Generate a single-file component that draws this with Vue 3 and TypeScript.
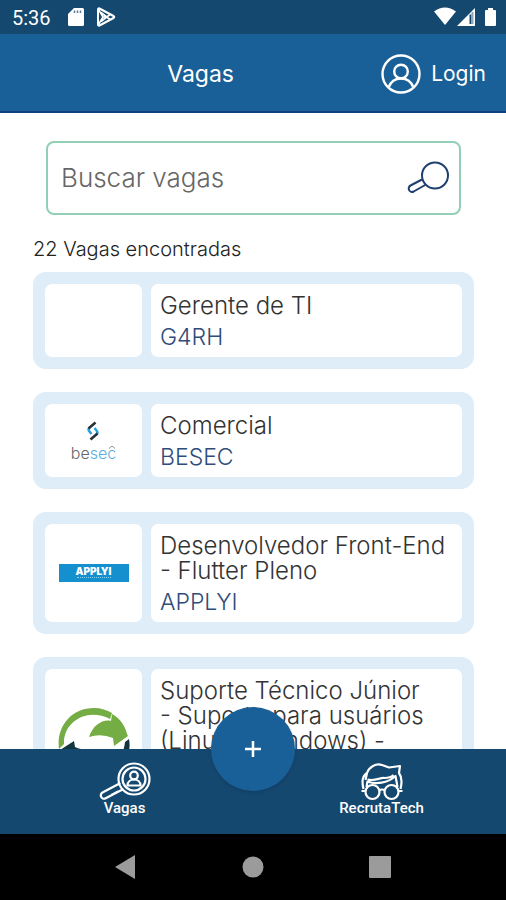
<script setup lang="ts">
import { ref } from 'vue'

interface Job {
  id: number
  title: string
  company?: string
  logo?: 'besec' | 'applyi' | 'cycle'
}

const query = ref('')
const total = 22

const jobs: Job[] = [
  { id: 1, title: 'Gerente de TI', company: 'G4RH' },
  { id: 2, title: 'Comercial', company: 'BESEC', logo: 'besec' },
  { id: 3, title: 'Desenvolvedor Front-End\n- Flutter Pleno', company: 'APPLYI', logo: 'applyi' },
  { id: 4, title: 'Suporte Técnico Júnior\n- Suporte para usuários\n(Linux e Windows) -', logo: 'cycle' },
]
</script>

<template>
  <div class="screen">
    <div class="status">
      <span class="clock">5:36</span>
      <svg class="sd" width="16" height="20" viewBox="0 0 16 20">
        <path d="M6 1h8.500q1.500 0 1.500 1.500v15q0 1.500-1.500 1.500h-13Q0 19 0 17.500V7z" fill="#fff" />
        <path d="M6.500 3.500v2.500M9.500 3.500v2.500M12.500 3.500v2.500" stroke="#5d7b96" stroke-width="1.500" />
      </svg>
      <svg class="play" width="20" height="20" viewBox="0 0 20 20" fill="none" stroke="#fff" stroke-linejoin="round">
        <path d="M2 2.500v15q0 1.500 1.500 1L17.500 11q1.500-1 0-2L3.500 1.500Q2 1 2 2.500z" stroke-width="2" />
        <path d="M2.500 2.500L7 10l-4.500 7.500M7 10h4M5 5.500l9 7M5 14.500l9-7" stroke-width="1.600" />
      </svg>
      <span class="spacer"></span>
      <svg width="64" height="20" viewBox="0 0 64 20" fill="#fff">
        <path d="M0 4.500Q11-3.500 22 4.500L11 18z" />
        <path d="M41 1v18H23z" />
        <path d="M36.500 7.500v9.500" stroke="#15486f" stroke-width="2" />
        <path d="M38.500 5v12" stroke="#8fa6ba" stroke-width="2" />
        <path d="M54 1h5v2h2q1 0 1 1v14q0 1-1 1h-9q-1 0-1-1V4q0-1 1-1h2z" />
      </svg>
    </div>

    <header class="appbar">
      <h1>Vagas</h1>
      <button class="login" type="button">
        <svg width="40" height="40" viewBox="0 0 40 40" fill="none" stroke="#fff" stroke-width="2.400">
          <circle cx="20" cy="20" r="18.500" />
          <circle cx="20" cy="17.500" r="6.800" />
          <path d="M7.500 33.500C10 27 15 24.500 20 24.500s10 2.500 12.500 9" />
        </svg>
        <span>Login</span>
      </button>
    </header>

    <main class="content">
      <div class="search">
        <input v-model="query" type="text" placeholder="Buscar vagas" aria-label="Buscar vagas" />
        <button type="button" aria-label="Buscar">
          <svg width="42" height="34" viewBox="0 0 42 34" fill="none" stroke="#1f3f70" stroke-width="2">
            <circle cx="28" cy="14.500" r="13" />
            <path d="M15 18.500L3.500 24.500a3.400 3.400 0 0 0 3.200 6L19 23.500" stroke-linejoin="round" />
          </svg>
        </button>
      </div>

      <p class="count">{{ total }} Vagas encontradas</p>

      <ul class="list">
        <li v-for="job in jobs" :key="job.id" class="card" :class="{ tall: !job.company }">
          <div class="logo">
            <div v-if="job.logo === 'besec'" class="besec">
              <svg width="14" height="20" viewBox="0 0 14 20" fill="none" stroke-width="2.600">
                <path d="M3.500 6.500q-1.800 2 0 4l2 2.500" stroke="#2ba1e0" />
                <path d="M10.500 13.500q1.800-2 0-4l-2-2.500" stroke="#2ba1e0" />
                <path d="M9.500 1.500L2.500 7.500M4.500 18.500l7-6" stroke="#27313a" />
              </svg>
              <span class="besec-name">be<b>sec</b></span>
              <svg class="besec-cap" width="8" height="4" viewBox="0 0 8 4" fill="none" stroke="#8a949b">
                <path d="M1 3.500L4 1l3 2.500" />
              </svg>
            </div>
            <div v-else-if="job.logo === 'applyi'" class="applyi">
              <span>APPLYI</span>
              <i></i>
            </div>
            <svg v-else-if="job.logo === 'cycle'" width="72" height="72" viewBox="0 0 72 72">
              <path d="M1 42C-2 20 13 1 36 1c7 0 13 2 18 5l-2 6C29 0 5 15 6 37z" fill="#74ad43" />
              <path d="M31 30C35 18 45 12 53 14l1-7c8 4 13 12 15 20l1 2-14 10-1-8q-12-5-24-1z" fill="#74ad43" />
              <path d="M71 32C75 52 58 71 36 71c-7 0-13-2-18-5l2-6c23 11 45-2 47-25z" fill="#123540" />
              <path d="M41 42C37 54 27 60 19 58l-1 7C10 61 5 53 3 45l-1-2 14-9 1 6q12 5 24 2z" fill="#123540" />
            </svg>
          </div>
          <div class="info">
            <h2>{{ job.title }}</h2>
            <p v-if="job.company">{{ job.company }}</p>
          </div>
        </li>
      </ul>
    </main>

    <nav class="tabs">
      <a href="#vagas">
        <svg width="52" height="40" viewBox="0 0 52 40" fill="none" stroke="#fff" stroke-width="2.200">
          <circle cx="35" cy="17" r="15.500" />
          <circle cx="35" cy="17" r="11.500" />
          <circle cx="35" cy="13.500" r="3.800" />
          <path d="M28.500 23.500c0-8 13-8 13 0z" />
          <path d="M20.500 21.500L3.500 30.500a3.300 3.300 0 0 0 3.200 5.800L23.500 27.500M12.500 33l6-3.200" stroke-linecap="round" />
        </svg>
        <span>Vagas</span>
      </a>
      <a href="#recrutatech">
        <svg width="44" height="40" viewBox="0 0 44 40" fill="none" stroke="#fff" stroke-width="2.200" stroke-linejoin="round">
          <circle cx="12.500" cy="30" r="7" />
          <circle cx="31.500" cy="30" r="7" />
          <path d="M19 28.500q3-2 6 0M5.500 29H1.500M38.500 29h4" />
          <path d="M3.500 27C2 21 2 14 7 11 9 5 16 1 22 3l7 2.500L40 4l-1 7c3 4 3 10 1.500 16" />
          <path d="M7 11l-1.500 7M6.500 25l1-5.500c8 3 20 2 28-5.500l2 11M7.500 17.500c8 2 12-2 17-1.500 4 0 7-1 9-3" />
        </svg>
        <span>RecrutaTech</span>
      </a>
      <button class="fab" type="button" aria-label="Adicionar">
        <svg width="18" height="18" viewBox="0 0 18 18" stroke="#fff" stroke-width="2.500">
          <path d="M9 1v16M1 9h16" />
        </svg>
      </button>
    </nav>

    <div class="system">
      <button type="button" aria-label="Voltar">
        <svg width="22" height="24" viewBox="0 0 22 24" fill="#9b9b9b"><path d="M0 12L20 0v24z" /></svg>
      </button>
      <button type="button" aria-label="Início">
        <svg width="22" height="24" viewBox="0 0 22 24" fill="#9b9b9b"><circle cx="11" cy="12" r="10.500" /></svg>
      </button>
      <button type="button" aria-label="Recentes">
        <svg width="22" height="24" viewBox="0 0 22 24" fill="#9b9b9b"><rect y="1" width="22" height="22" rx="1" /></svg>
      </button>
    </div>
  </div>
</template>

<style>
body {
  margin: 0;
}
</style>

<style scoped>
* {
  box-sizing: border-box;
}

.screen {
  display: flex;
  flex-direction: column;
  height: 100vh;
  background: #fff;
  font-family: Inter, "Open Sans", sans-serif;
}

h1,
h2,
p,
ul {
  margin: 0;
  padding: 0;
  font-weight: inherit;
}

button {
  border: 0;
  padding: 0;
  background: none;
  font: inherit;
  color: inherit;
  cursor: pointer;
}

svg {
  display: block;
  flex: none;
}

.status {
  display: flex;
  flex: none;
  align-items: center;
  height: 34px;
  padding: 0 8px 0 12px;
  background: #15486f;
  color: #fff;
}

.clock {
  padding-top: 2px;
  font: 400 20px/24px Roboto, sans-serif;
}

.sd {
  margin-left: 17px;
}

.play {
  margin-left: 12px;
}

.spacer {
  flex: 1;
}

.appbar {
  display: flex;
  flex: none;
  align-items: center;
  height: 79px;
  padding: 2px 20px 0;
  border-bottom: 2px solid #10407f;
  background: #1a6098;
  color: #fff;
}

.appbar h1 {
  flex: 1;
  text-align: center;
  font-size: 23px;
  line-height: 28px;
  font-weight: 400;
}

.login {
  display: flex;
  align-items: center;
  gap: 10px;
  font-size: 21px;
  line-height: 28px;
}

.content {
  flex: 1;
  min-height: 0;
  overflow: hidden;
  padding: 28px 32px 0 33px;
}

.search {
  display: flex;
  align-items: center;
  height: 74px;
  margin: 0 13px;
  padding: 0 10px 0 13px;
  border: 2px solid #93cfb6;
  border-radius: 8px;
}

.search input {
  flex: 1;
  min-width: 0;
  border: 0;
  padding: 0;
  outline: 0;
  background: none;
  font: 300 26px/32px Inter, "Open Sans", sans-serif;
  color: #333;
}

.search input::placeholder {
  color: #666;
  opacity: 1;
}

.count {
  margin: 22px 0 11px;
  font-size: 20px;
  line-height: 24px;
  font-weight: 300;
  color: #222;
}

.list {
  display: flex;
  flex-direction: column;
  gap: 23px;
  list-style: none;
}

.card {
  display: flex;
  flex: none;
  gap: 9px;
  padding: 12px;
  border-radius: 13px;
  background: #deedf8;
}

.card.tall {
  min-height: 172px;
}

.logo {
  display: flex;
  flex: none;
  align-items: center;
  justify-content: center;
  width: 97px;
  border-radius: 7px;
  background: #fff;
}

.info {
  flex: 1;
  min-width: 0;
  padding: 9px 0 7px 9px;
  border-radius: 7px;
  background: #fff;
  font-size: 24px;
  line-height: 25px;
  font-weight: 300;
}

.info h2 {
  font-size: inherit;
  white-space: pre-line;
  color: #333;
}

.info p {
  margin-top: 7px;
  font-size: 23px;
  color: #2f4c7a;
}

.besec {
  position: relative;
  display: flex;
  flex-direction: column;
  align-items: center;
  gap: 4px;
}

.besec-name {
  font-size: 16px;
  line-height: 16px;
  font-weight: 300;
  color: #666;
}

.besec-name b {
  font-weight: 300;
  color: #58aee2;
}

.besec-cap {
  position: absolute;
  right: 0;
  bottom: 12px;
}

.applyi {
  display: flex;
  flex-direction: column;
  align-items: center;
  width: 70px;
  height: 18px;
  padding-top: 3px;
  background: #1590cf;
  font-size: 10px;
  line-height: 9px;
  font-weight: 900;
  color: #fff;
}

.applyi i {
  width: 34px;
  margin-top: 1px;
  border-top: 1px dotted #8accec;
}

.tabs {
  position: relative;
  display: flex;
  flex: none;
  height: 85px;
  padding-top: 13px;
  background: #15486f;
}

.tabs a {
  display: flex;
  flex: 1;
  flex-direction: column;
  align-items: center;
  font: 500 15px/18px Roboto, sans-serif;
  color: #fff;
  text-decoration: none;
}

.tabs span {
  margin-top: -3px;
}

.tabs a:first-child {
  padding-right: 8px;
}

.fab {
  position: absolute;
  top: -42px;
  left: 50%;
  display: flex;
  align-items: center;
  justify-content: center;
  width: 84px;
  height: 84px;
  margin-left: -42px;
  border-radius: 50%;
  background: #1a6098;
  box-shadow: 0 2px 3px rgba(10, 40, 80, 0.25);
}

.system {
  display: flex;
  flex: none;
  align-items: center;
  justify-content: space-around;
  height: 66px;
  padding: 0 62px;
  background: #000;
}
</style>
